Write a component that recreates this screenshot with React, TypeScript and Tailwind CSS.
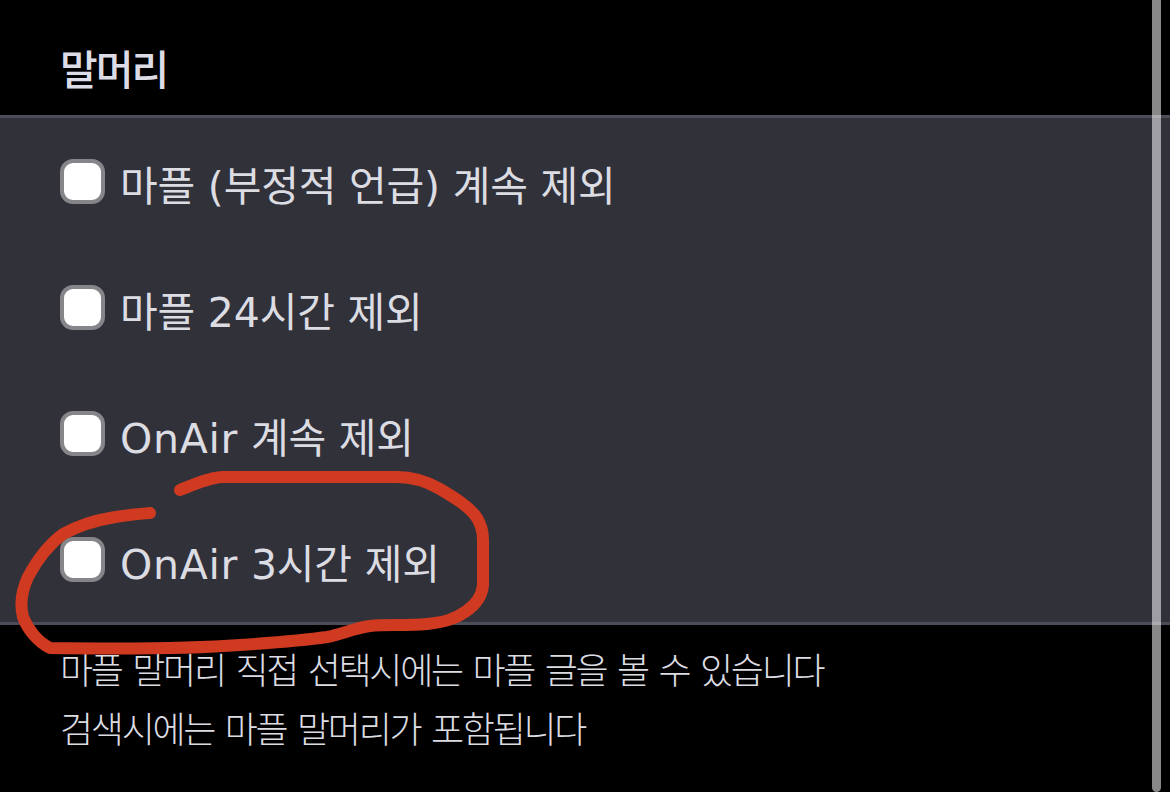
import React from 'react';

const rows = [
  { brand: '', text: '마플 (부정적 언급) 계속 제외' },
  { brand: '', text: '마플 24시간 제외' },
  { brand: 'OnAir', text: ' 계속 제외' },
  { brand: 'OnAir', text: ' 3시간 제외' },
];

const App: React.FC = () => {
  return (
    <div className="relative h-[792px] w-[1170px] overflow-hidden bg-black font-['Noto_Sans_CJK_KR',sans-serif]">
      <div className="flex h-[115px] items-center px-[60px] pt-[20px]">
        <h2 className="text-[41px] font-medium leading-none tracking-[-2px] text-[#dcdce6]">말머리</h2>
      </div>

      <div className="h-[510px] border-y-[3px] border-[#4c4c58] bg-[#31313a] px-[60px] pt-[41px]">
        {rows.map((row) => (
          <label key={row.brand + row.text} className="flex h-[126px] items-start gap-[15px]">
            <span className="h-[45px] w-[45px] shrink-0 rounded-[13px] border-[4px] border-[#85858a] bg-white" />
            <span className="whitespace-pre font-['DejaVu_Sans','Noto_Sans_CJK_KR',sans-serif] text-[41px] leading-[56px] tracking-[-0.2px] text-[#dcdce3]">
              <span className="tracking-[0.7px]">{row.brand}</span>
              {row.text}
            </span>
          </label>
        ))}
      </div>

      <div className="px-[60px] pt-[14px] text-[36px] font-light leading-[59px] tracking-[-2.3px] text-[#dcdce3] [word-spacing:5px]">
        <p>마플 말머리 직접 선택시에는 마플 글을 볼 수 있습니다</p>
        <p>검색시에는 마플 말머리가 포함됩니다</p>
      </div>

      {/* scrollbar */}
      <div className="absolute right-[9px] top-0 h-[792px] w-[9px] rounded-b-full bg-[#ffffff88]" />

      {/* red pen scribble */}
      <svg className="absolute left-0 top-0" width="1170" height="792" viewBox="0 0 1170 792" fill="none">
        <path
          d="M180 490 C195 484 208 478 222 477 L397 477 C415 477 428 482 440 489 C455 498 470 507 477 518 C482 526 483 532 483 540 L483 585 C482 598 474 606 465 612 C455 619 445 622 427 624 C405 626 385 624 370 626 C355 628 342 634 327 637 C300 641 270 643 240 645 C200 648 120 649 50 648 C38 642 28 630 23 617 C20 605 22 590 28 577 C36 562 48 545 63 534 C78 526 92 521 110 518 C125 515 138 514 150 513"
          stroke="#d03a20"
          strokeWidth="12"
          strokeLinecap="round"
          strokeLinejoin="round"
        />
      </svg>
    </div>
  );
};

export default App;
